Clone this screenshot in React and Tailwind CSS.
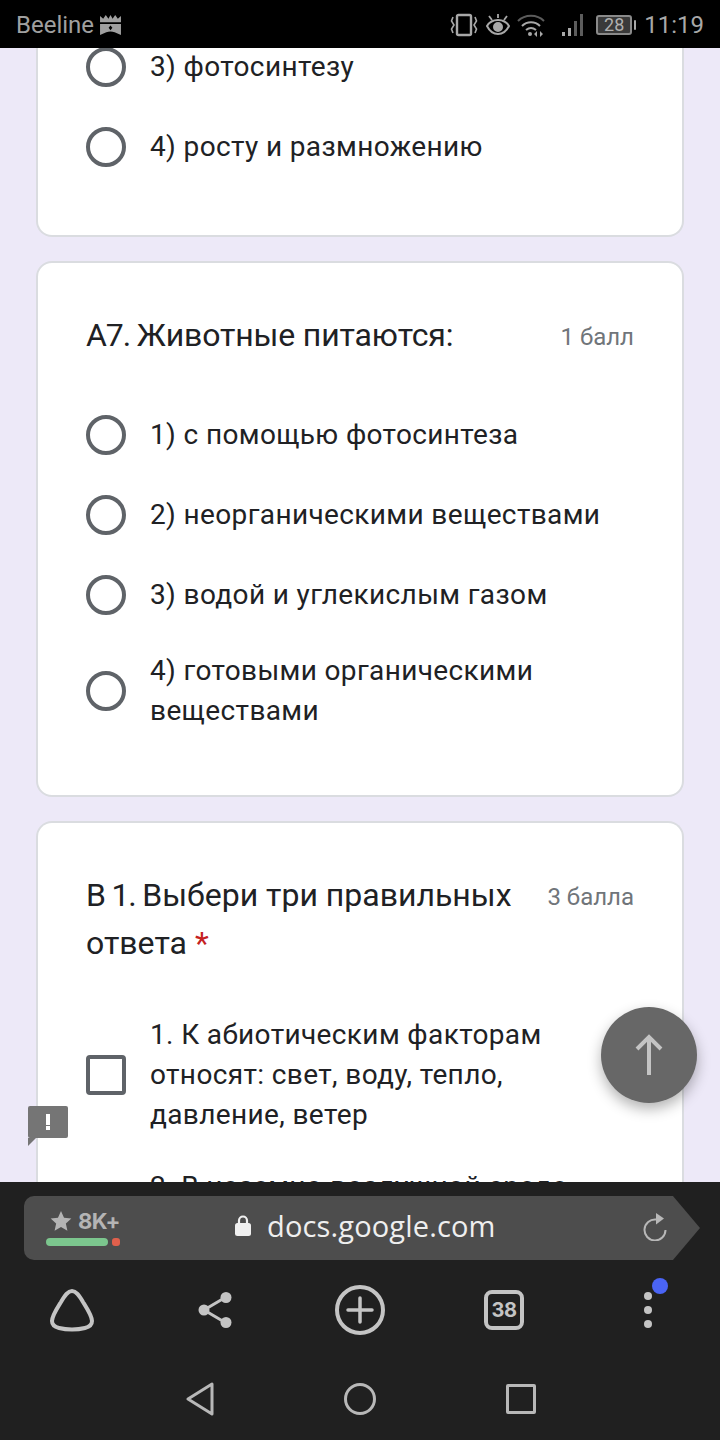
const font = "font-['Roboto',sans-serif]";

const Radio = () => (
  <span className="w-10 h-10 shrink-0 rounded-full border-[4px] border-[#5f6368] bg-white" />
);

const Option = ({ children, lines }) => (
  <div className="flex items-center gap-6 py-5">
    <Radio />
    <span className={`text-[28px] leading-10 tracking-[0.37px] text-[#202124] ${lines ? "-my-1" : ""}`}>{children}</span>
  </div>
);

const StatusIcons = () => (
  <div className="flex items-center text-[#a8a8a8]">
    {/* vibrate */}
    <svg width="28" height="24" viewBox="0 0 28 24" fill="none" stroke="currentColor" className="mr-2">
      <rect x="7" y="2" width="14" height="20" rx="1.500" strokeWidth="2.400" />
      <path d="M3 4L1.500 8 4 12l-2.500 4L3 20M25 4l1.500 4L24 12l2.500 4L25 20" strokeWidth="1.600" />
    </svg>
    {/* eye comfort */}
    <svg width="24" height="24" viewBox="0 0 24 24" fill="none" stroke="currentColor" strokeWidth="2" className="mr-[7px]">
      <path d="M1 13c3-5 7-6 11-6s8 1 11 6c-3 6-7 8-11 8s-8-2-11-8z" />
      <circle cx="12" cy="14" r="4" fill="currentColor" />
      <path d="M3 3l3 4M21 3l-3 4M12 1v4" strokeWidth="1.800" />
    </svg>
    {/* wifi */}
    <svg width="28" height="24" viewBox="0 0 28 24" fill="none" stroke="currentColor" className="mr-[17px]">
      <path d="M1 8c7-7 19-7 26 0" strokeWidth="2" opacity="0.55" />
      <path d="M5 13c5-5 13-5 18 0" strokeWidth="2" />
      <path d="M9 17c3-2.500 7-2.500 10 0" strokeWidth="2" />
      <circle cx="13" cy="21" r="2" fill="currentColor" stroke="none" />
      <path d="M20 18v6l-3-3zM23 18v6l3-3z" fill="currentColor" stroke="none" />
    </svg>
    {/* signal */}
    <svg width="24" height="24" viewBox="0 0 24 24" fill="currentColor" className="mr-[10px]">
      <rect x="0" y="19" width="3" height="4" />
      <rect x="6" y="15" width="3" height="8" />
      <rect x="12" y="8" width="3" height="15" opacity="0.55" />
      <rect x="18" y="1" width="3" height="22" opacity="0.55" />
    </svg>
    {/* battery */}
    <div className="flex items-center mr-2">
      <span className="w-[36px] h-[20px] rounded-[3px] border-2 border-[#8a8a8a] bg-[#3a3a3a] flex items-center justify-center text-[18px] leading-none text-[#b0b0b0]">28</span>
      <span className="w-[2px] h-[10px] bg-[#a8a8a8] ml-[2px] rounded-sm" />
    </div>
    <span className="text-[24px] leading-none">11:19</span>
  </div>
);

const Crown = () => (
  <svg width="23" height="21" viewBox="0 0 22 20" fill="#a0a0a0">
    <path d="M1 1l3 2.500L6.500 0l2.500 3.500L11 0l2 3.500L15.500 0 18 3.500 21 1v6H1z" />
    <path d="M1 8.500h20V19l-6-2.500c-2.500-1-5.500-1-8 0L1 19z" />
    <path d="M11 10l1.800 2.200L11 14.500l-1.800-2.300z" fill="#000" />
  </svg>
);

const BrowserLogo = () => (
  <svg width="46" height="44" viewBox="0 0 46 44" fill="none" stroke="#c4c4c4" strokeWidth="4">
    <path d="M23 3C27 3 30 7 34 14C39 22 43 28 43 33C43 37 40 39 36 40C32 41 27 41.500 23 41.500C19 41.500 14 41 10 40C6 39 3 37 3 33C3 28 7 22 12 14C16 7 19 3 23 3Z" />
  </svg>
);

const ShareIcon = () => (
  <svg width="34" height="36" viewBox="0 0 34 36" fill="#c4c4c4" stroke="#c4c4c4">
    <path d="M6 18L28 5M6 18l22 13" strokeWidth="3" fill="none" />
    <circle cx="28" cy="5.500" r="5.500" stroke="none" />
    <circle cx="6" cy="18" r="5.500" stroke="none" />
    <circle cx="28" cy="30.500" r="5.500" stroke="none" />
  </svg>
);

const AddIcon = () => (
  <svg width="50" height="50" viewBox="0 0 50 50" fill="none" stroke="#c4c4c4">
    <circle cx="25" cy="25" r="23" strokeWidth="4" />
    <path d="M13 25h24M25 13v24" strokeWidth="3.500" strokeLinecap="round" />
  </svg>
);

const LockIcon = () => (
  <svg width="16" height="21" viewBox="0 0 16 21" fill="none" className="mr-4">
    <path d="M4 9V5.500a4 4 0 0 1 8 0V9" stroke="#f0f0f0" strokeWidth="2.200" />
    <rect x="0" y="8" width="16" height="13" rx="2.500" fill="#f0f0f0" />
  </svg>
);

const ReloadIcon = () => (
  <svg width="24" height="28" viewBox="0 0 24 28" fill="none" className="absolute left-[619px] top-[17px]">
    <path d="M13 6.500A10.500 10.500 0 1 0 22.500 17" stroke="#b8b8b8" strokeWidth="2" />
    <path d="M13 0l8 5.500-8 6z" fill="#b8b8b8" />
  </svg>
);

export default function App() {
  return (
    <div className={`w-[720px] h-[1440px] overflow-hidden flex flex-col bg-[#ede9f8] ${font}`}>
      <div className="h-12 shrink-0 bg-black flex items-center justify-between pl-4 pr-4 pt-[2px]">
        <div className="flex items-center gap-[5px] text-[#a0a0a0]">
          <span className="text-[24px] leading-none">Beeline</span>
          <Crown />
        </div>
        <StatusIcons />
      </div>

      <div className="flex-1 min-h-0 overflow-hidden relative">
        <div className="mx-9 flex flex-col gap-6 -mt-[2px]">
          {/* previous question, scrolled off */}
          <div className="bg-white border-2 border-t-0 border-[#dadce0] rounded-b-[16px] px-12 pb-[48px]">
            <div className="-mt-[19px]">
              <Option>3) фотосинтезу</Option>
              <Option>4) росту и размножению</Option>
            </div>
          </div>

          <div className="bg-white border-2 border-[#dadce0] rounded-[16px] px-12 pt-[48px] pb-[48px]">
            <div className="flex justify-between items-start">
              <span className="text-[32px] leading-12 tracking-[-0.15px] text-[#202124]">
                <span className="tracking-[-1.1px]">А7. </span>Животные питаются:
              </span>
              <span className="text-[24px] leading-12 text-[#70757a] mt-[2px]">1 балл</span>
            </div>
            <div className="mt-[34px]">
              <Option>1) с помощью фотосинтеза</Option>
              <Option>2) неорганическими веществами</Option>
              <Option>3) водой и углекислым газом</Option>
              <Option lines>4) готовыми органическими веществами</Option>
            </div>
          </div>

          <div className="bg-white border-2 border-b-0 border-[#dadce0] rounded-t-[16px] px-12 pt-[48px] h-[400px]">
            <div className="flex justify-between items-start gap-8">
              <span className="text-[32px] leading-12 text-[#202124]">
                <span className="tracking-[-1.2px]">В 1. </span>Выбери три правильных ответа <span className="text-[#c5221f]">*</span>
              </span>
              <span className="text-[24px] leading-12 text-[#70757a] mt-[2px] whitespace-nowrap">3 балла</span>
            </div>
            <div className="mt-[48px] flex items-center gap-6">
              <span className="w-10 h-10 shrink-0 rounded-[4px] border-[4px] border-[#5f6368]" />
              <span className="text-[28px] leading-10 tracking-[0.37px] text-[#202124]">1. К абиотическим факторам относят: свет, воду, тепло, давление, ветер</span>
            </div>
            <div className="mt-8 pl-[64px] text-[28px] leading-10 tracking-[0.37px] text-[#202124] whitespace-nowrap">2. В наземно-воздушной среде</div>
          </div>
        </div>

        {/* report bubble */}
        <div className="absolute left-7 top-[1058px] w-10 h-8 rounded-[2px] bg-[#757575] flex flex-col items-center justify-center gap-[1px]">
          <span className="w-1 h-[11px] bg-white" />
          <span className="w-1 h-1 bg-white" />
          <span className="absolute left-0 top-8 border-t-[8px] border-t-[#757575] border-r-[8px] border-r-transparent" />
        </div>

        {/* scroll to top */}
        <div className="absolute left-[601px] top-[959px] w-24 h-24 rounded-full bg-[#676767] shadow-[0_6px_14px_rgba(0,0,0,0.3)] flex items-center justify-center">
          <svg width="28" height="42" viewBox="0 0 28 42" fill="none" stroke="#c4c4c4" strokeWidth="4">
            <path d="M14 41V3M2 15L14 3l12 12" />
          </svg>
        </div>
      </div>

      {/* browser chrome */}
      <div className="h-[258px] shrink-0 bg-[#202020] flex flex-col">
        <div className="mt-[14px] ml-6 w-[676px] h-16 relative flex items-center">
          <div className="absolute inset-0 bg-[#4d4d4d] [clip-path:polygon(0_0,96%_0,100%_50%,96%_100%,0_100%)] rounded-l-[10px]" />
          <div className="relative w-[100px] ml-[26px] flex flex-col">
            <div className="flex items-center gap-[6px] h-[22px]">
              <svg width="22" height="22" viewBox="0 0 24 24" fill="#b4b4b4"><path d="M12 1l3.300 7.400 8 .8-6 5.400 1.700 7.900-7-4-7 4 1.700-7.900-6-5.400 8-.8z" /></svg>
              <span className="font-['Inter',sans-serif] font-bold text-[22px] leading-none text-[#b4b4b4] tracking-[-0.5px]">8K+</span>
            </div>
            <div className="flex gap-[4px] mt-[6px] -ml-[4px]">
              <span className="w-[62px] h-2 rounded-full bg-[#7cc68e]" />
              <span className="w-2 h-2 rounded-[3px] bg-[#e0604c]" />
            </div>
          </div>
          <div className="relative flex items-center ml-[85px] -mt-[6px]">
            <LockIcon />
            <span className="font-['Open_Sans',sans-serif] text-[29px] leading-none tracking-[0.15px] text-[#efefef]">docs.google.com</span>
          </div>
          <ReloadIcon />
        </div>

        <div className="h-[100px] flex items-center pl-[49px]">
          <BrowserLogo />
          <div className="ml-[103px]"><ShareIcon /></div>
          <div className="ml-[103px]"><AddIcon /></div>
          <div className="ml-[99px] w-10 h-10 rounded-[8px] border-[4px] border-[#c4c4c4] flex items-center justify-center">
            <span className="font-['Inter',sans-serif] font-bold text-[20px] leading-none text-[#c4c4c4] tracking-[-0.5px]">38</span>
          </div>
          <div className="relative flex flex-col gap-[6px] ml-[120px]">
            <span className="w-2 h-2 rounded-full bg-[#c4c4c4]" />
            <span className="w-2 h-2 rounded-full bg-[#c4c4c4]" />
            <span className="w-2 h-2 rounded-full bg-[#c4c4c4]" />
            <span className="absolute left-2 -top-[14px] w-4 h-4 rounded-full bg-[#4a64f5]" />
          </div>
        </div>

        <div className="h-[78px] flex items-center justify-center gap-[130px] ml-[2px]">
          <svg width="28" height="34" viewBox="0 0 28 34" fill="none" stroke="#b8b8b8" strokeWidth="3" strokeLinejoin="round"><path d="M26 2v30L2 17z" /></svg>
          <span className="w-8 h-8 rounded-full border-[3px] border-[#b8b8b8]" />
          <span className="w-[30px] h-[30px] rounded-[2px] border-[3px] border-[#b8b8b8]" />
        </div>
      </div>
    </div>
  );
}
